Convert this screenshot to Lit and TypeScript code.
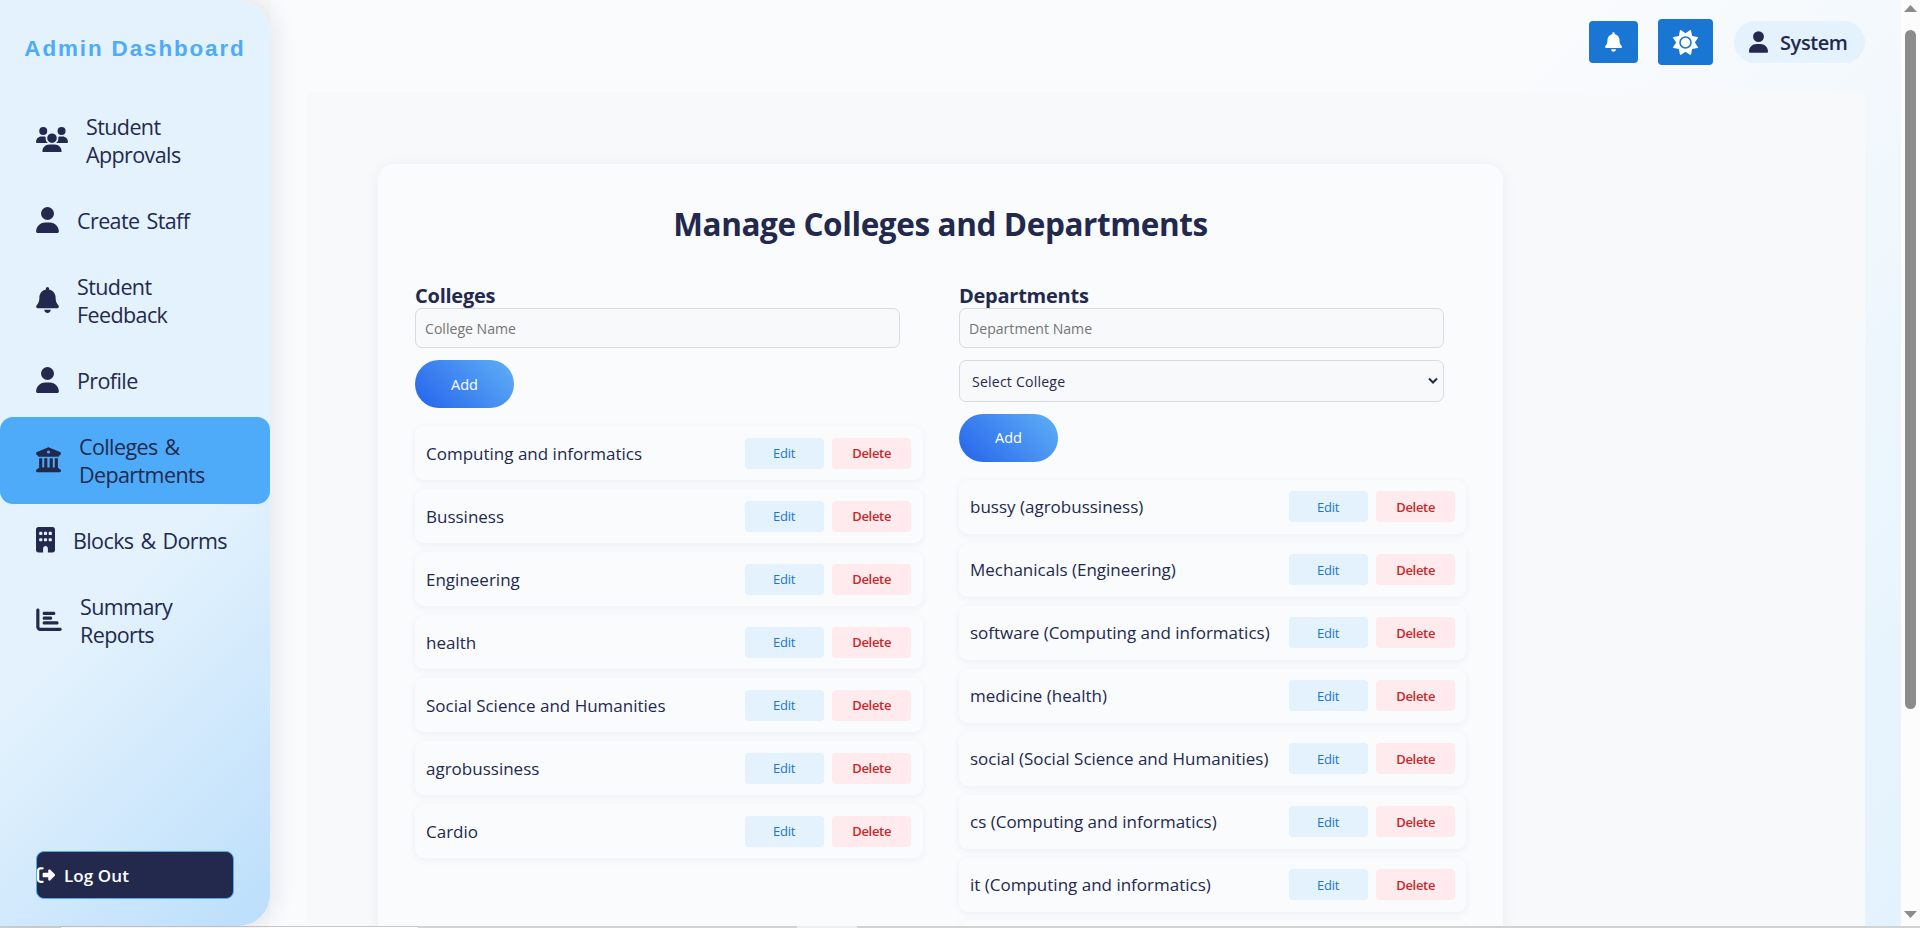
import { LitElement, html, css, svg } from "lit";
import { customElement } from "lit/decorators.js";

const I: Record<string, [string, string]> = {
  users: ["0 0 640 512", "M144 0a80 80 0 1 1 0 160A80 80 0 1 1 144 0zM512 0a80 80 0 1 1 0 160A80 80 0 1 1 512 0zM0 298.7C0 239.8 47.8 192 106.7 192l42.7 0c15.9 0 31 3.5 44.6 9.7c-1.3 7.2-1.9 14.7-1.9 22.3c0 38.2 16.8 72.5 43.3 96c-.2 0-.4 0-.7 0L21.3 320C9.6 320 0 310.4 0 298.7zM405.3 320c-.2 0-.4 0-.7 0c26.6-23.5 43.3-57.8 43.3-96c0-7.6-.7-15-1.9-22.3c13.6-6.3 28.7-9.7 44.6-9.7l42.7 0C592.2 192 640 239.8 640 298.7c0 11.8-9.6 21.3-21.3 21.3l-213.3 0zM224 224a96 96 0 1 1 192 0 96 96 0 1 1 -192 0zM128 485.3C128 411.7 187.7 352 261.3 352l117.3 0C452.3 352 512 411.7 512 485.3c0 14.7-11.9 26.7-26.7 26.7l-330.7 0c-14.7 0-26.7-11.9-26.7-26.7z"],
  user: ["0 0 448 512", "M224 256A128 128 0 1 0 224 0a128 128 0 1 0 0 256zm-45.7 48C79.8 304 0 383.8 0 482.3C0 498.7 13.3 512 29.7 512l388.6 0c16.4 0 29.7-13.3 29.7-29.7C448 383.8 368.2 304 269.7 304l-91.4 0z"],
  bell: ["0 0 448 512", "M224 0c-17.7 0-32 14.3-32 32l0 19.2C119 66 64 130.6 64 208l0 18.8c0 47-17.3 92.4-48.500 127.600l-7.400 8.300c-8.400 9.400-10.400 22.900-5.300 34.400S19.400 416 32 416l384 0c12.600 0 24-7.400 29.200-18.900s3.100-25-5.300-34.400l-7.400-8.300C401.300 319.200 384 273.900 384 226.800l0-18.800c0-77.400-55-142-128-156.800L256 32c0-17.700-14.300-32-32-32zm45.300 493.300c12-12 18.700-28.300 18.700-45.300l-64 0-64 0c0 17 6.700 33.300 18.700 45.300s28.300 18.700 45.300 18.700s33.300-6.700 45.300-18.700z"],
  bank: ["0 0 512 512", "M243.4 2.600l-224 96c-14 6-21.800 21-18.700 35.800S16.800 160 32 160l0 8c0 13.300 10.700 24 24 24l400 0c13.300 0 24-10.700 24-24l0-8c15.200 0 28.300-10.700 31.300-25.600s-4.800-29.900-18.700-35.800l-224-96c-8-3.400-17.200-3.400-25.200 0zM128 224l-64 0 0 196.300c-.6 .3-1.200 .7-1.800 1.100l-48 32c-11.700 7.800-17 22.400-12.900 35.900S17.900 512 32 512l448 0c14.100 0 26.500-9.200 30.600-22.700s-1.100-28.100-12.900-35.900l-48-32c-.6-.4-1.200-.7-1.800-1.100L448 224l-64 0 0 192-40 0 0-192-64 0 0 192-48 0 0-192-64 0 0 192-40 0 0-192zM256 64a32 32 0 1 1 0 64 32 32 0 1 1 0-64z"],
  building: ["0 0 384 512", "M48 0C21.500 0 0 21.500 0 48L0 464c0 26.500 21.500 48 48 48l96 0 0-80c0-26.500 21.500-48 48-48s48 21.500 48 48l0 80 96 0c26.500 0 48-21.500 48-48l0-416c0-26.500-21.500-48-48-48L48 0zM64 240c0-8.800 7.200-16 16-16l32 0c8.800 0 16 7.200 16 16l0 32c0 8.800-7.200 16-16 16l-32 0c-8.800 0-16-7.200-16-16l0-32zm112-16l32 0c8.800 0 16 7.200 16 16l0 32c0 8.800-7.200 16-16 16l-32 0c-8.800 0-16-7.200-16-16l0-32c0-8.800 7.200-16 16-16zm80 16c0-8.800 7.200-16 16-16l32 0c8.800 0 16 7.200 16 16l0 32c0 8.800-7.200 16-16 16l-32 0c-8.800 0-16-7.200-16-16l0-32zM80 96l32 0c8.800 0 16 7.200 16 16l0 32c0 8.800-7.200 16-16 16l-32 0c-8.800 0-16-7.200-16-16l0-32c0-8.800 7.200-16 16-16zm80 16c0-8.800 7.200-16 16-16l32 0c8.800 0 16 7.200 16 16l0 32c0 8.800-7.200 16-16 16l-32 0c-8.800 0-16-7.200-16-16l0-32zM272 96l32 0c8.800 0 16 7.200 16 16l0 32c0 8.800-7.200 16-16 16l-32 0c-8.800 0-16-7.200-16-16l0-32c0-8.800 7.200-16 16-16z"],
  chart: ["0 0 512 512", "M32 32c17.700 0 32 14.300 32 32l0 336c0 8.800 7.200 16 16 16l400 0c17.700 0 32 14.300 32 32s-14.300 32-32 32L80 480c-44.200 0-80-35.800-80-80L0 64C0 46.300 14.300 32 32 32zm96 96c0-17.700 14.300-32 32-32l192 0c17.700 0 32 14.300 32 32s-14.300 32-32 32l-192 0c-17.700 0-32-14.300-32-32zm32 64l128 0c17.700 0 32 14.300 32 32s-14.300 32-32 32l-128 0c-17.700 0-32-14.300-32-32s14.300-32 32-32zm0 96l256 0c17.700 0 32 14.300 32 32s-14.300 32-32 32l-256 0c-17.700 0-32-14.300-32-32s14.300-32 32-32z"],
  sun: ["0 0 512 512", "M361.500 1.200c5 2.100 8.600 6.600 9.600 11.900L391 121l107.900 19.800c5.300 1 9.800 4.600 11.900 9.600s1.500 10.700-1.600 15.200L446.900 256l62.300 90.300c3.100 4.500 3.700 10.200 1.600 15.200s-6.600 8.600-11.900 9.600L391 391 371.100 498.900c-1 5.300-4.600 9.800-9.600 11.900s-10.700 1.500-15.200-1.600L256 446.900l-90.300 62.300c-4.500 3.100-10.200 3.700-15.200 1.600s-8.600-6.600-9.600-11.900L121 391 13.100 371.100c-5.300-1-9.800-4.600-11.900-9.600s-1.500-10.700 1.600-15.200L65.100 256 2.800 165.700c-3.100-4.500-3.700-10.200-1.600-15.200s6.600-8.600 11.900-9.600L121 121 140.900 13.100c1-5.300 4.600-9.800 9.600-11.900s10.700-1.500 15.200 1.600L256 65.100 346.300 2.800c4.500-3.100 10.200-3.700 15.200-1.600zM160 256a96 96 0 1 1 192 0 96 96 0 1 1 -192 0zm224 0a128 128 0 1 0 -256 0 128 128 0 1 0 256 0z"],
  logout: ["0 0 512 512", "M377.900 105.900L500.700 228.700c7.200 7.200 11.300 17.100 11.300 27.300s-4.100 20.100-11.300 27.300L377.900 406.100c-6.400 6.400-15 9.900-24 9.900c-18.700 0-33.900-15.200-33.900-33.900l0-62.100-128 0c-17.700 0-32-14.300-32-32l0-64c0-17.700 14.300-32 32-32l128 0 0-62.100c0-18.700 15.200-33.900 33.900-33.900c9 0 17.600 3.600 24 9.900zM160 96L96 96c-17.700 0-32 14.300-32 32l0 256c0 17.700 14.300 32 32 32l64 0c17.700 0 32 14.300 32 32s-14.300 32-32 32l-64 0c-53 0-96-43-96-96L0 128C0 75 43 32 96 32l64 0c17.700 0 32 14.300 32 32s-14.300 32-32 32z"],
};

const icon = (name: string, w: number, h: number) =>
  svg`<svg width=${w} height=${h} viewBox=${I[name][0]} fill="currentColor"><path fill-rule="evenodd" d=${I[name][1]}></path></svg>`;

const NAV: [string, number, string[]][] = [
  ["users", 32, ["Student", "Approvals"]],
  ["user", 23, ["Create Staff"]],
  ["bell", 23, ["Student", "Feedback"]],
  ["user", 23, ["Profile"]],
  ["bank", 25, ["Colleges &", "Departments"]],
  ["building", 19, ["Blocks & Dorms"]],
  ["chart", 26, ["Summary", "Reports"]],
];
const COLLEGES = ["Computing and informatics", "Bussiness", "Engineering", "health", "Social Science and Humanities", "agrobussiness", "Cardio"];
const DEPTS = ["bussy (agrobussiness)", "Mechanicals (Engineering)", "software (Computing and informatics)", "medicine (health)", "social (Social Science and Humanities)", "cs (Computing and informatics)", "it (Computing and informatics)"];

@customElement("app-root")
export class AppRoot extends LitElement {
  static styles = css`
    * { box-sizing: border-box; }
    :host { display: flex; flex-direction: column; width: 1920px; height: 928px; overflow: hidden; font-family: "Open Sans", "Noto Sans", sans-serif; color: #23294d; background: #fcfcfc; }
    svg { display: block; flex: none; }
    .app { display: flex; height: 926px; flex: none; }
    .wrap { width: 270px; flex: none; position: relative; z-index: 1; background: #f8f8f8; }
    .side { width: 270px; height: 926px; display: flex; flex-direction: column; border-radius: 0 32px 32px 0; background: linear-gradient(135deg, #e3f2fd 60%, #bbdefb 100%); box-shadow: 4px 0 24px rgba(35, 41, 77, 0.1); }
    .brand { font: bold 22.4px/28px "Liberation Sans", Arial, sans-serif; letter-spacing: 1.9px; color: #4dabf9; text-align: center; padding-top: 35px; height: 97px; white-space: nowrap; }
    .nav { display: flex; flex-direction: column; gap: 7.100px; flex: 1; }
    .item { display: flex; align-items: center; gap: 18px; padding: 15.500px 36px; font-size: 21.500px; line-height: 28px; letter-spacing: -0.6px; word-spacing: 2px; border-radius: 13px; white-space: nowrap; }
    .item svg { margin-top: -2px; }
    .item span { display: block; }
    .item.active { background: #4dabf9; }
    .logout { display: flex; align-items: center; gap: 9px; margin: 0 36px 27px; height: 48px; border: 1px solid #4dabf9; border-radius: 8px; background: #23294d; color: #fff; font-weight: 600; font-size: 17px; letter-spacing: 0.1px; }
    .main { width: 1631px; flex: none; display: flex; flex-direction: column; padding-left: 37px; padding-right: 36px; background: linear-gradient(135deg, #f9fbfd 52%, #e3f2fd 100%); }
    .top { height: 92px; flex: none; display: flex; justify-content: flex-end; align-items: flex-start; padding-top: 19px; }
    .sq { display: flex; align-items: center; justify-content: center; background: #1976d2; color: #fff; border-radius: 4px; }
    .sq.a { width: 49px; height: 42px; margin-top: 2px; margin-right: 20px; }
    .sq.b { width: 55px; height: 46px; margin-right: 21px; }
    .pill { display: flex; align-items: center; gap: 12px; width: 131px; height: 42px; padding-left: 15px; margin-top: 2px; border-radius: 21px; background: #e3f2fd; font-size: 20px; font-weight: 600; letter-spacing: -0.4px; }
    .panel { flex: 1; min-height: 0; background: #f8f9fb; padding: 72px 0 0 71px; overflow: hidden; }
    .card { width: 1125px; height: 900px; border-radius: 16px; background: #f9fbfd; box-shadow: 0 2px 16px rgba(35, 41, 77, 0.05); padding: 36px 37px 0; }
    .title { margin: 0; text-align: center; font-size: 31.500px; line-height: 48px; font-weight: 700; letter-spacing: -0.4px; }
    .cols { display: flex; gap: 36px; margin-top: 36px; }
    .col { width: 508px; display: flex; flex-direction: column; align-items: flex-start; }
    .col.second { width: 507px; }
    .h { margin: 0; font-size: 20px; line-height: 24px; font-weight: 700; letter-spacing: -0.25px; }
    .inp { width: 485px; height: 40px; border: 1px solid #d9dbde; border-radius: 7px; background: #f8f9fb; display: flex; align-items: center; padding: 0 9px; font-size: 14.100px; color: #757575; margin-bottom: 12px; }
    .sel { height: 42px; justify-content: space-between; padding: 0 4px 0 12px; color: #23294d; letter-spacing: 0.2px; margin-bottom: 11.600px; }
    .add { width: 99px; height: 48px; flex: none; border-radius: 24px; background: linear-gradient(45deg, #2563eb, #60b0f7); color: #fff; font-size: 14.500px; font-weight: 500; display: flex; align-items: center; justify-content: center; margin-bottom: 18px; }
    .row { width: 100%; height: 54px; flex: none; margin-bottom: 9px; border-radius: 9px; background: #f9fbfd; box-shadow: 0 2px 8px rgba(35, 41, 77, 0.05); display: flex; align-items: center; padding: 0 12px 0 11px; font-size: 17px; white-space: nowrap; }
    .second .row { padding-right: 11px; }
    .row span { flex: 1; }
    .btn { width: 78.700px; height: 31px; border-radius: 4px; display: flex; align-items: center; justify-content: center; font-size: 13px; letter-spacing: -0.2px; }
    .edit { background: #e3f2fd; color: #1976d2; margin-right: 8.800px; font-weight: 500; }
    .del { background: #ffebee; color: #c62828; font-weight: 600; letter-spacing: -0.3px; }
    .bar { width: 19px; display: flex; flex-direction: column; align-items: center; background: #fcfcfc; padding-top: 5px; }
    .thumb { width: 11px; height: 679px; border-radius: 6px; background: #8b8b8b; margin: 18px 0 202px; }
    .foot { height: 2px; flex: none; display: flex; background: #d2d2d2; }
    .f1 { width: 357px; margin-left: 61px; border-top: 1px solid #c8c8c8; background: #fff; }
    .f2 { width: 60px; margin-left: 379px; background: #efefef; }
  `;

  private row(t: string) {
    return html`<div class="row"><span>${t}</span><div class="btn edit">Edit</div><div class="btn del">Delete</div></div>`;
  }

  render() {
    return html`
      <div class="app">
        <div class="wrap"><aside class="side">
          <div class="brand">Admin Dashboard</div>
          <nav class="nav">${NAV.map(([n, w, t]) => html`<div class="item ${n === "bank" ? "active" : ""}">${icon(n, w, n === "user" || n === "bell" ? 26 : 25.5)}<div>${t.map((x) => html`<span>${x}</span>`)}</div></div>`)}</nav>
          <div class="logout">${icon("logout", 18, 18)}Log Out</div>
        </aside></div>
        <main class="main">
          <header class="top">
            <div class="sq a">${icon("bell", 17, 20)}</div>
            <div class="sq b">${icon("sun", 25, 25)}</div>
            <div class="pill">${icon("user", 19, 22)}System</div>
          </header>
          <section class="panel"><div class="card">
            <h1 class="title">Manage Colleges and Departments</h1>
            <div class="cols">
              <div class="col">
                <h2 class="h">Colleges</h2>
                <div class="inp">College Name</div>
                <div class="add">Add</div>
                ${COLLEGES.map((t) => this.row(t))}
              </div>
              <div class="col second">
                <h2 class="h">Departments</h2>
                <div class="inp">Department Name</div>
                <div class="inp sel">Select College<svg width="12" height="8" viewBox="0 0 12 8" fill="none" stroke="currentColor" stroke-width="2"><path d="M2 1.500l4 4 4-4"></path></svg></div>
                <div class="add">Add</div>
                ${DEPTS.map((t) => this.row(t))}
                <div class="row"></div>
              </div>
            </div>
          </div></section>
        </main>
        <div class="bar">
          <svg width="13" height="7" viewBox="0 0 13 7" fill="#8b8b8b"><path d="M0 7L6.500 0 13 7z"></path></svg>
          <div class="thumb"></div>
          <svg width="13" height="7" viewBox="0 0 13 7" fill="#8b8b8b"><path d="M0 0L6.500 7 13 0z"></path></svg>
        </div>
      </div>
      <div class="foot"><div class="f1"></div><div class="f2"></div></div>`;
  }
}
